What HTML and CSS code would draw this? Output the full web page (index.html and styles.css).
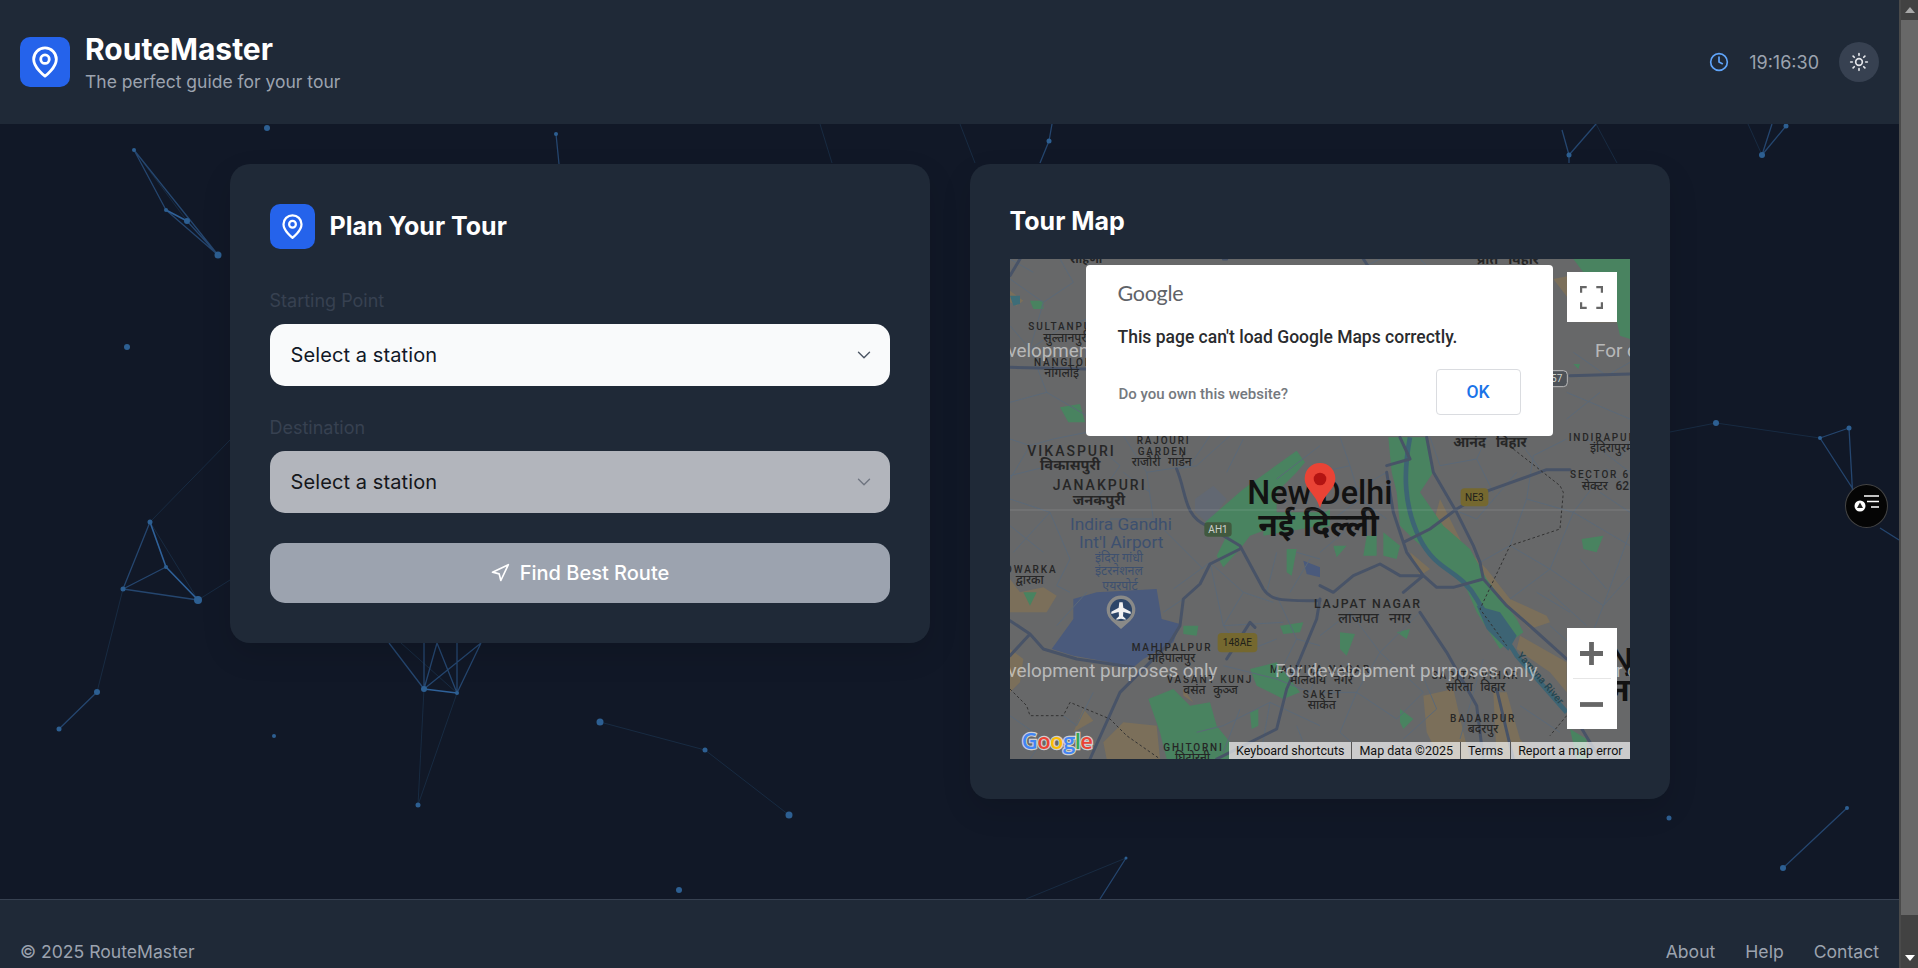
FILE: index.html
```html
<!DOCTYPE html>
<html lang="en">
<head>
<meta charset="utf-8">
<title>RouteMaster</title>
<link rel="stylesheet" href="styles.css">
</head>
<body>
<svg class="particles" viewBox="0 0 1899 1004" aria-hidden="true">
  <g class="lk-dim">
    <path d="M134 150L187 221M150 522L198 600M150 522L230 440M198 600L230 580M123 589L97 692M401 643L457 693M424 689L418 805M457 693L418 805M600 722L705 750M705 750L789 815M1126 858L1026 899M820 124L832 163M960 124L975 163M1670 432L1716 423M1716 423L1820 438M1617 163L1596 124M1748 124L1762 155"/>
  </g>
  <g class="lk">
    <path d="M134 150L166 210M134 150L218 255M166 210L218 255M187 221L218 255M150 522L123 589M166 567L123 589M123 589L198 600M97 692L59 729M389 643L424 689M424 643L424 689M437 643L457 693M437 643L424 689M457 643L457 693M481 643L424 689M481 643L457 693M1126 858L1100 899M556 134L559 164M1049 141L1040 163M1049 141L1052 124M1569 155L1596 124M1569 155L1562 130M1569 163L1569 155M1762 155L1786 126M1762 155L1772 124M1847 808L1783 868M1820 438L1849 428M1849 428L1853 500M1820 438L1860 500M1880 528L1899 540"/>
  </g>
  <g class="lk-hi">
    <path d="M166 210L187 221M150 522L166 567M166 567L198 600M424 689L457 693"/>
  </g>
  <g class="dots">
    <circle cx="134" cy="150" r="2"/><circle cx="166" cy="210" r="2"/><circle cx="187" cy="221" r="3"/><circle cx="218" cy="255" r="3.5"/>
    <circle cx="127" cy="347" r="3"/><circle cx="150" cy="522" r="2.5"/><circle cx="166" cy="567" r="2"/><circle cx="123" cy="589" r="2.5"/>
    <circle cx="198" cy="600" r="4"/><circle cx="97" cy="692" r="3"/><circle cx="59" cy="729" r="2.5"/><circle cx="424" cy="689" r="3"/>
    <circle cx="457" cy="693" r="2"/><circle cx="418" cy="805" r="2.5"/><circle cx="274" cy="736" r="2"/><circle cx="600" cy="722" r="3.5"/>
    <circle cx="705" cy="750" r="2.5"/><circle cx="789" cy="815" r="3.5"/><circle cx="679" cy="890" r="3"/><circle cx="1126" cy="858" r="1.5"/>
    <circle cx="267" cy="128" r="3"/><circle cx="556" cy="134" r="2"/><circle cx="1049" cy="141" r="2.5"/><circle cx="1569" cy="155" r="2.5"/>
    <circle cx="1762" cy="155" r="3"/><circle cx="1786" cy="126" r="2.5"/><circle cx="1716" cy="423" r="3"/><circle cx="1820" cy="438" r="2"/>
    <circle cx="1849" cy="428" r="2.5"/><circle cx="1669" cy="818" r="2.5"/><circle cx="1847" cy="808" r="2"/><circle cx="1783" cy="868" r="3"/>
  </g>
</svg>

<header class="topbar">
  <div class="brand">
    <span class="brand-badge">
      <svg class="brand-pin" viewBox="0 0 24 24"><path d="M20 10c0 6-8 12-8 12s-8-6-8-12a8 8 0 0 1 16 0Z"/><circle cx="12" cy="10" r="3"/></svg>
    </span>
    <div class="brand-text">
      <h1>RouteMaster</h1>
      <p>The perfect guide for your tour</p>
    </div>
  </div>
  <div class="status">
    <svg class="clock" viewBox="0 0 24 24"><circle cx="12" cy="12" r="10"/><path d="M12 6v6l4 2"/></svg>
    <span class="time">19:16:30</span>
    <button class="theme" type="button" aria-label="Toggle theme">
      <svg viewBox="0 0 24 24"><circle cx="12" cy="12" r="4"/><path d="M12 2v2M12 20v2M4.93 4.93l1.41 1.41M17.66 17.66l1.41 1.41M2 12h2M20 12h2M6.34 17.66l-1.41 1.41M19.07 4.93l-1.41 1.41"/></svg>
    </button>
  </div>
</header>

<main class="layout">
  <section class="card">
    <div class="card-head">
      <span class="card-badge">
        <svg viewBox="0 0 24 24"><path d="M20 10c0 6-8 12-8 12s-8-6-8-12a8 8 0 0 1 16 0Z"/><circle cx="12" cy="10" r="3"/></svg>
      </span>
      <h2>Plan Your Tour</h2>
    </div>
    <label class="field-label" for="from">Starting Point</label>
    <div class="select-wrap">
      <select id="from" class="select"><option>Select a station</option></select>
      <svg class="chevron" viewBox="0 0 24 24"><path d="m6 9 6 6 6-6"/></svg>
    </div>
    <label class="field-label second" for="to">Destination</label>
    <div class="select-wrap">
      <select id="to" class="select off" disabled><option>Select a station</option></select>
      <svg class="chevron dimmed" viewBox="0 0 24 24"><path d="m6 9 6 6 6-6"/></svg>
    </div>
    <button class="find" type="button">
      <svg viewBox="0 0 24 24"><path d="M3 11 22 2l-9 19-2-8Z"/></svg>
      Find Best Route
    </button>
  </section>

  <section class="card">
    <h2 class="map-title">Tour Map</h2>
    <div class="map">
      <svg class="map-art" viewBox="0 0 1860 1500">
        <rect width="1860" height="1500" fill="#676869"/>
        <!-- land use -->
        <g class="tan">
          <path d="M0 960L30 1000 100 985 140 1010 110 1060 0 1060ZM0 1170L40 1200 30 1270 0 1300ZM280 1450L340 1390 440 1400 450 1500 290 1500ZM0 95L40 125 20 140 0 130ZM520 1290L550 1330 520 1310ZM220 1350L250 1385 190 1420Z"/>
          <path transform="translate(930 0)" d="M360 720L430 860 500 930 570 1020 680 1070 690 1090 630 1110 560 1040 470 960 400 880 330 830ZM600 1130L740 1210 740 1300 690 1240 590 1170ZM310 1310L400 1290 430 1420 450 1500 360 1500 320 1420ZM520 1300L560 1300 600 1440 650 1500 530 1500ZM700 60L800 40 900 190 800 190ZM270 880L330 930 300 950Z"/>
        </g>
        <path class="blue" d="M125 1170L190 1080 190 1020 260 1000 440 990 455 1080 510 1095 490 1150 400 1200 370 1225 300 1210 190 1190Z"/>
        <path class="blue" d="M880 905L930 925 930 955 890 945Z"/>
        <path class="slate" d="M555 720L610 680 650 720 620 760 590 790 555 760Z"/>
        <g class="green">
          <path d="M585 790L700 690 860 575 885 610 860 640 800 700 800 800 720 830 690 870 640 925 620 890 650 830Z"/>
          <path d="M760 830L930 800 930 760 760 760ZM150 445L210 435 225 490 175 490ZM60 125L100 125 100 150 70 150ZM40 1000L80 1000 60 1040ZM520 1100L565 1100 560 1130 520 1125ZM810 1100L880 1090 870 1120 820 1125ZM830 870L860 870 845 950 830 940ZM415 1320L490 1290 540 1340 600 1330 620 1400 660 1450 660 1500 470 1500 450 1420ZM720 1230L800 1210 870 1300 820 1320 740 1280ZM720 1360L745 1350 745 1400 725 1410Z"/>
          <path transform="translate(930 0)" d="M205 535L320 535 340 640 300 700 370 800 450 870 500 960 590 1080 610 1120 540 1170 470 1060 440 990 350 900 280 840 240 800 230 700 215 640ZM760 0L930 0 930 240 900 230 880 140 790 40ZM760 315L780 315 775 330ZM785 840L850 830 830 880 790 870ZM60 1120L105 1125 80 1190 60 1170ZM230 1120L270 1110 260 1140ZM140 830L170 830 170 890 130 890ZM40 860L80 860 50 895ZM190 820L240 860 230 900 190 890ZM240 1350L280 1380 250 1410 240 1390ZM750 1410L800 1440 800 1500 770 1500ZM0 770L30 750 30 800 0 810Z"/>
        </g>
        <!-- water -->
        <g class="river" transform="translate(930 0)">
          <path d="M270 535C250 640 250 740 300 840S420 930 470 1020 550 1120 590 1190L740 1360"/>
          <path class="wide" d="M470 1040L540 1060 590 1130 565 1175 500 1110Z"/>
        </g>
        <path class="teal" d="M0 110L30 110 30 135 10 140Z"/>
        <!-- minor roads -->
        <path class="minor" d="M0 60L100 130 190 70 150 0M100 130L60 270 150 210 230 180M0 200L60 270M0 430L110 400 230 470M110 400L60 270M0 540L60 560 0 660M230 520L130 540 60 560M0 720L120 760 180 900 140 980 180 1000M120 760L10 880M340 530L410 640 540 620 600 530M410 640L430 780 580 930M430 780L300 780M340 640L420 700M660 530L560 620 500 630M700 540L650 640M490 990L600 910 700 1000M600 910L640 1100 820 1090M700 1000L640 1100M640 1100L700 1180M460 1060L520 1020M250 1300L200 1400 160 1370M640 1220L800 1260 860 1140 800 1010M800 1260L900 1300 930 1220M860 1140L930 1160M640 1400L780 1330 930 1400M780 1330L750 1500M0 1370L100 1440 60 1500M560 1420L640 1400M800 660L930 560M860 880L930 900M700 1000L790 1030M0 650L120 620M770 1000L800 880M840 1000L900 900M700 1180L800 1140M640 1480L690 1350M860 1400L900 1500M100 1440L190 1500M0 800L100 880M140 1100L230 1000M260 560L330 620 260 720M70 40L0 0"/>
        <path class="minor" transform="translate(930 0)" d="M330 535L360 620 470 600 500 535M470 600L520 700M590 535L660 630M590 640L470 780 420 760M740 540L640 590 620 720 570 860 480 910M620 720L760 760 860 630 930 690M760 760L690 930 850 1040 930 950M690 930L570 860M850 1040L790 1190 690 1100M930 820L850 1040M570 1020L690 930M760 760L930 860M800 540L930 640M740 400L930 480M760 280L860 350 930 310M740 480L840 400M0 1130L90 1060 180 1180 300 1060M180 1180L110 1300 230 1380M230 1380L310 1300 180 1180M110 1300L60 1420 150 1500M300 1230L350 1350 250 1440M600 1340L720 1420M60 720L200 640M0 640L90 620 120 720 40 780 0 760M0 1300L110 1300M60 60L180 0M300 0L420 120M0 880L120 780M90 620L60 535M120 720L200 780M690 1000L800 1100M840 700L930 760M780 900L860 990M900 600L930 540M420 1440L490 1200M650 1000L750 1060"/>
        <!-- major roads -->
        <g class="road">
          <path d="M500 630C530 700 520 770 590 800L690 860 760 990C780 1020 800 1025 900 1025L930 1025M690 870L600 915 570 975 520 1020 510 1100 480 1150 330 1300 240 1500M0 1085L60 1125 100 1170 200 1200 370 1225M60 1125L0 1190M0 325L230 330M0 50L30 0M620 1500L800 1410 830 1290 870 1200 920 1080 930 1020M650 1200L720 1090 735 1105M650 0L640 0"/>
          <path transform="translate(930 0)" d="M0 980L40 1000 100 950 180 915 240 950 310 950 350 985 400 985 490 960 560 1040 640 1110 740 1200M200 640L220 760 260 880 310 950M310 950L250 1000M200 620L270 600 240 535M320 535L340 640 410 760 460 860 480 910 490 960M250 850L330 810 410 750 505 695 680 632 750 632M300 1060L380 1180 470 1340 490 1500M530 1290L580 1500M750 350L930 345M130 0L150 30M780 1400L840 1500"/>
        </g>
        <path class="boundary" d="M0 1290L50 1340 60 1370 160 1370 180 1330 300 1380 350 1430 450 1500"/>
        <path class="boundary" transform="translate(930 0)" d="M580 570L720 680 730 700 720 810 570 860 480 1050 560 1160M740 1370L690 1430"/>
        <!-- labels -->
        <g class="lbl">
          <text class="big-b" x="180" y="12">रोहिणी</text>
          <text class="ls" x="55" y="213">SULTANPUR</text>
          <text class="dev sm" x="100" y="248">सुल्तानपुरी</text>
          <text class="ls" x="72" y="321">NANGLOI</text>
          <text class="dev sm" x="103" y="353">नांगलोई</text>
          <text class="ls med" x="52" y="590">VIKASPURI</text>
          <text class="dev med strong" x="90" y="632">विकासपुरी</text>
          <text class="ls med" x="128" y="694">JANAKPURI</text>
          <text class="dev med strong" x="188" y="738">जनकपुरी</text>
          <text class="ls" x="380" y="554">RAJOURI</text>
          <text class="ls" x="383" y="588">GARDEN</text>
          <text class="dev sm" x="365" y="622">राजौरी गार्डन</text>
          <text class="ls" x="-14" y="942">DWARKA</text>
          <text class="dev sm" x="17" y="975">द्वारका</text>
          <text class="ls" x="365" y="1175">MAHIPALPUR</text>
          <text class="dev sm" x="413" y="1210">महिपालपुर</text>
          <text class="ls" x="470" y="1272">VASANT KUNJ</text>
          <text class="dev sm" x="520" y="1305">वसंत कुञ्ज</text>
          <text class="ls" x="460" y="1477">GHITORNI</text>
          <text class="dev sm" x="495" y="1510">घिटोरनी</text>
          <text class="ls" x="780" y="1243">MALVIYA NAGAR</text>
          <text class="dev sm" x="840" y="1275">मालवीय नगर</text>
          <text class="ls" x="878" y="1317">SAKET</text>
          <text class="dev sm" x="893" y="1350">साकेत</text>
          <text class="ls mid" x="912" y="1047">LAJPAT NAGAR</text>
          <text class="dev mid" x="985" y="1092">लाजपत नगर</text>
          <text class="dev mid strong" x="1330" y="563">आनंद विहार</text>
          <text class="ls" x="1676" y="545">INDIRAPURAM</text>
          <text class="dev sm" x="1740" y="578">इंदिरापुरम</text>
          <text class="ls" x="1680" y="658">SECTOR 62</text>
          <text class="dev sm" x="1715" y="692">सेक्टर 62</text>
          <text class="ls" x="1265" y="1260">SARITA VIHAR</text>
          <text class="dev sm" x="1308" y="1295">सरिता विहार</text>
          <text class="ls" x="1320" y="1390">BADARPUR</text>
          <text class="dev sm" x="1373" y="1422">बदरपुर</text>
          <text class="dev mid strong" x="1400" y="14">प्रीत विहार</text>
        </g>
        <g class="airport-lbl">
          <text class="air-big" x="180" y="812">Indira Gandhi</text>
          <text class="air-big" x="207" y="866">Int'l Airport</text>
          <text class="air-sm" x="255" y="908">इंदिरा गांधी</text>
          <text class="air-sm" x="255" y="948">इंटरनेशनल</text>
          <text class="air-sm" x="277" y="992">एयरपोर्ट</text>
        </g>
        <text class="river-lbl" transform="translate(1520 1190) rotate(49)">Yamuna River</text>
        <text class="city" x="712" y="735">New Delhi</text>
        <text class="city dev-city" x="745" y="830">नई दिल्ली</text>
        <text class="city" x="1800" y="1240">Noida</text>
        <text class="city dev-city" x="1800" y="1325">नोएडा</text>
        <!-- shields -->
        <rect class="sh-green" x="583" y="790" width="82" height="43" rx="10"/>
        <text class="sh-t light" x="624" y="822">AH1</text>
        <rect class="sh-olive" x="623" y="1122" width="119" height="58" rx="12"/>
        <text class="sh-t" x="682" y="1162">148AE</text>
        <rect class="sh-olive" x="1352" y="688" width="83" height="54" rx="12"/>
        <text class="sh-t" x="1393" y="727">NE3</text>
        <rect class="sh-dark" x="1590" y="335" width="82" height="48" rx="12"/>
        <text class="sh-t light" x="1640" y="370">57</text>
        <!-- airport pin -->
        <path class="air-pin" d="M333 1110L305 1085A43 43 0 1 1 361 1085Z"/>
        <circle class="air-disc" cx="333" cy="1053" r="33"/>
        <path class="air-plane" d="M328 1030L338 1030 340 1046 362 1058 362 1065 340 1059 339 1072 347 1079 347 1082 333 1079 319 1082 319 1079 327 1072 326 1059 304 1065 304 1058 326 1046Z"/>
        <!-- tile seam + watermark -->
        <path class="seam" d="M0 753H1860"/>
        <g class="mark">
          <text x="-165" y="293">For development purposes only</text>
          <text x="795" y="293">For development purposes only</text>
          <text x="1755" y="293">For development purposes only</text>
          <text x="-165" y="1253">For development purposes only</text>
          <text x="795" y="1253">For development purposes only</text>
          <text x="1755" y="1253">For development purposes only</text>
        </g>
        <!-- marker -->
        <path class="pin" d="M930 747C915 700 884 692 884 658A46 46 0 1 1 976 658C976 692 945 700 930 747Z"/>
        <circle class="pin-dot" cx="930" cy="660" r="19"/>
        <!-- google wordmark -->
        <text class="gm" x="35" y="1470"><tspan fill="#4285f4">G</tspan><tspan fill="#ea4335">o</tspan><tspan fill="#fbbc05">o</tspan><tspan fill="#4285f4">g</tspan><tspan fill="#34a853">l</tspan><tspan fill="#ea4335">e</tspan></text>
      </svg>

      <div class="dialog">
        <div class="dialog-logo">Google</div>
        <div class="dialog-msg">This page can't load Google Maps correctly.</div>
        <div class="dialog-foot">
          <span class="dialog-own">Do you own this website?</span>
          <button class="dialog-ok" type="button">OK</button>
        </div>
      </div>

      <button class="ctl fs" type="button" aria-label="Fullscreen">
        <svg viewBox="0 0 24 24"><path d="M1 7V1h6M17 1h6v6M23 17v6h-6M7 23H1v-6"/></svg>
      </button>
      <div class="ctl zoom">
        <button type="button" aria-label="Zoom in"><svg viewBox="0 0 24 24"><path d="M0 12H24M12 0V24"/></svg></button>
        <i></i>
        <button type="button" aria-label="Zoom out"><svg viewBox="0 0 24 24"><path d="M0 12H24"/></svg></button>
      </div>
      <div class="attrib">
        <span>Keyboard shortcuts</span>
        <span>Map data ©2025</span>
        <span>Terms</span>
        <span>Report a map error</span>
      </div>
    </div>
  </section>
</main>

<footer class="foot">
  <span>© 2025 RouteMaster</span>
  <nav class="foot-links"><a href="#">About</a><a href="#">Help</a><a href="#">Contact</a></nav>
</footer>

<button class="fab" type="button" aria-label="Open menu">
  <svg viewBox="0 0 30 30"><path d="M12 5H27M15 10.5H27M19 16H27"/><circle cx="8" cy="15" r="5.5"/><path class="fab-tri" d="M8 11.5L11 17H5Z"/></svg>
</button>

<div class="scrollbar" aria-hidden="true">
  <span class="sb-btn"><i class="sb-up"></i></span>
  <span class="sb-thumb"></span>
  <span class="sb-rest"></span>
  <span class="sb-btn"><i class="sb-down"></i></span>
</div>
</body>
</html>
```

FILE: styles.css
```css
* { box-sizing: border-box; }
html { background: #111827; }
body { margin: 0 19px 0 0; position: relative; min-height: 1004px; background: #111827; color: #fff; font-family: Inter, "Liberation Sans", sans-serif; }
h1, h2, p { margin: 0; }

.scrollbar { position: fixed; right: 0; top: 0; bottom: 0; width: 19px; z-index: 6; background: #424242; border-left: 2px solid #4a4a4a; display: flex; flex-direction: column; }
.sb-btn { flex: 0 0 20px; background: #424242; display: flex; align-items: center; justify-content: center; }
.sb-thumb { flex: 0 0 895px; background: #686868; }
.sb-rest { flex: 1; }
.sb-up, .sb-down { display: block; width: 0; height: 0; border-left: 5px solid transparent; border-right: 5px solid transparent; }
.sb-up { border-bottom: 6px solid #a8a8a8; }
.sb-down { border-top: 6px solid #fff; }

.particles { position: absolute; left: 0; top: 0; width: 1899px; height: 1004px; z-index: 0; }
.particles g { fill: none; }
.lk-dim { stroke: #182b42; stroke-width: 1; }
.lk { stroke: #25466f; stroke-width: 1.3; }
.lk-hi { stroke: #2f6199; stroke-width: 1.6; }
.particles .dots { fill: #2d5f92; }

.topbar { position: relative; z-index: 1; height: 124px; padding: 0 20px; background: #1f2937; display: flex; align-items: center; justify-content: space-between; }
.brand { display: flex; align-items: center; gap: 15px; }
.brand-badge { width: 50px; height: 50px; border-radius: 10px; background: #2563eb; display: flex; align-items: center; justify-content: center; }
.brand-pin { width: 34px; height: 34px; }
.brand-pin path, .brand-pin circle, .card-badge path, .card-badge circle { fill: none; stroke: #fff; stroke-width: 2; stroke-linecap: round; stroke-linejoin: round; }
.brand-text h1 { font-size: 30px; font-weight: 700; line-height: 38px; }
.brand-text p { font-size: 17.5px; line-height: 25px; color: #9ca3af; margin-top: 1px; }
.status { display: flex; align-items: center; }
.clock { width: 20px; height: 20px; fill: none; stroke: #60a5fa; stroke-width: 2; stroke-linecap: round; stroke-linejoin: round; margin-right: 20px; }
.time { font-size: 18px; color: #9ca3af; margin-right: 20px; }
.theme { width: 40px; height: 40px; border: 0; padding: 0; border-radius: 50%; background: #374151; display: flex; align-items: center; justify-content: center; }
.theme svg { width: 20px; height: 20px; fill: none; stroke: #e5e7eb; stroke-width: 2; stroke-linecap: round; }

.layout { position: relative; z-index: 1; display: grid; grid-template-columns: 700px 700px; gap: 40px; justify-content: center; align-items: start; padding: 40px 0 100px; }
.card { background: #1f2937; border-radius: 20px; padding: 40px; box-shadow: 0 12px 30px rgba(0, 0, 0, .12); }
.card-head { display: flex; align-items: center; gap: 15px; margin-bottom: 39px; }
.card-badge { width: 45px; height: 45px; border-radius: 10px; background: #2563eb; display: flex; align-items: center; justify-content: center; }
.card-badge svg { width: 27px; height: 27px; }
.card h2 { font-size: 25px; font-weight: 700; line-height: 32px; }
.card-head h2 { margin-top: -2px; }
.field-label { display: block; font-size: 18px; line-height: 25px; color: #374151; margin-bottom: 11px; }
.field-label.second { margin-top: 29px; }
.select-wrap { position: relative; }
.select { display: block; width: 100%; height: 62px; border: 0; border-radius: 15px; padding: 0 21px; appearance: none; background: #f9fafb; color: #111827; font-family: Inter, "Liberation Sans", sans-serif; font-size: 20px; letter-spacing: .1px; opacity: 1; }
.select.off { background: #b2b5bc; color: #15171b; }
.chevron { position: absolute; right: 15px; top: 20px; width: 22px; height: 22px; fill: none; stroke: #4b5563; stroke-width: 1.5; stroke-linecap: round; stroke-linejoin: round; pointer-events: none; }
.chevron.dimmed { stroke: #6f7580; }
.find { margin-top: 30px; width: 100%; height: 60px; border: 0; border-radius: 15px; background: #9ca3af; color: #fff; font-family: Inter, "Liberation Sans", sans-serif; font-size: 20px; font-weight: 500; display: flex; align-items: center; justify-content: center; gap: 10px; }
.find svg { width: 20px; height: 20px; fill: none; stroke: #fff; stroke-width: 2; stroke-linecap: round; stroke-linejoin: round; }
.card .map-title { line-height: 34px; margin-bottom: 21px; }

.map { position: relative; width: 620px; height: 500px; overflow: hidden; font-family: Roboto, "Liberation Sans", sans-serif; }
.map-art { display: block; width: 620px; height: 500px; font-family: Roboto, "Noto Sans", sans-serif; }
.tan { fill: #7b6f5a; }
.blue { fill: #4a5a7c; }
.slate { fill: #626872; }
.green { fill: #498360; }
.river { fill: none; stroke: #3d6474; stroke-width: 14; }
.river .wide { fill: #3d6474; stroke: none; }
.teal { fill: #3d6d78; }
.minor { fill: none; stroke: #5b6978; stroke-width: 3; }
.road { fill: none; stroke: #485367; stroke-width: 9; stroke-linejoin: round; stroke-linecap: round; }
.boundary { fill: none; stroke: #333; stroke-width: 3; stroke-dasharray: 8 7; }
.lbl { fill: #262626; font-size: 30px; }
.ls { letter-spacing: 5.5px; font-weight: 500; font-size: 30px; }
.ls.med { font-size: 42px; letter-spacing: 6px; }
.ls.mid { font-size: 37px; letter-spacing: 5px; }
.dev { font-weight: 500; word-spacing: 14px; }
.dev.sm { font-size: 36px; }
.dev.med { font-size: 44px; }
.dev.mid { font-size: 42px; word-spacing: 20px; }
.dev.strong { font-weight: 700; }
.big-b { font-size: 36px; font-weight: 700; }
.airport-lbl { fill: #3d506f; }
.air-big { font-size: 52px; }
.air-sm { font-size: 37px; }
.river-lbl { fill: #24444f; font-size: 30px; font-weight: 500; letter-spacing: 1px; }
.city { fill: #121212; font-size: 97px; font-weight: 500; }
.dev-city { font-weight: 700; font-size: 96px; }
.sh-green { fill: #41593f; }
.sh-olive { fill: #75682f; }
.sh-dark { fill: #4d5258; stroke: #b9b9b9; stroke-width: 3; }
.sh-t { fill: #20201a; font-size: 30px; text-anchor: middle; }
.sh-t.light { fill: #cdd2cc; }
.air-pin { fill: #8a8a88; }
.air-disc { fill: #2c4568; }
.air-plane { fill: #f0f0f0; }
.seam { stroke: rgba(255, 255, 255, .22); stroke-width: 2; }
.mark { fill: rgba(255, 255, 255, .55); font-size: 56.5px; }
.pin { fill: #ea4335; }
.pin-dot { fill: #b31412; }
.gm { font-family: "Open Sans", Roboto, sans-serif; font-size: 66px; font-weight: 600; letter-spacing: -1.5px; stroke: rgba(255, 255, 255, .7); stroke-width: 7px; paint-order: stroke; }

.dialog { position: absolute; left: 76px; top: 6px; width: 467px; height: 171px; background: #fff; border-radius: 4px; color: #2a2b2e; padding: 0 32px; }
.dialog-logo { font-family: Lato, "Open Sans", sans-serif; color: #5f6368; font-size: 21.5px; line-height: 28px; margin-top: 14px; letter-spacing: -.3px; }
.dialog-msg { font-size: 17.5px; font-weight: 500; line-height: 24px; margin-top: 18px; }
.dialog-foot { display: flex; align-items: center; justify-content: space-between; margin-top: 21px; }
.dialog-own { font-size: 15px; font-weight: 500; color: #75797e; padding-left: 1px; margin-top: 2px; }
.dialog-ok { width: 85px; height: 46px; border: 1px solid #dadce0; border-radius: 4px; background: #fff; color: #1a73e8; font-family: Roboto, sans-serif; font-size: 17.5px; font-weight: 500; margin-top: -1px; }
.ctl { position: absolute; left: 557px; width: 50px; background: #fff; padding: 0; border: 0; }
.ctl svg { stroke: #666; fill: none; }
.fs { top: 13px; height: 50px; display: flex; align-items: center; justify-content: center; }
.fs svg { width: 23px; height: 23px; stroke-width: 2.6; }
.zoom { top: 369px; height: 101px; display: flex; flex-direction: column; align-items: center; }
.zoom button { flex: 1; width: 100%; padding: 0; border: 0; background: none; display: flex; align-items: center; justify-content: center; }
.zoom svg { width: 23px; height: 23px; stroke-width: 5; }
.zoom i { display: block; width: 38px; height: 1px; background: #e6e6e6; }
.attrib { position: absolute; right: 0; bottom: 0; height: 17px; display: flex; background: rgba(255, 255, 255, .66); color: #111; font-size: 12.5px; line-height: 17px; }
.attrib span { padding: 0 7px; border-left: 1px solid #555; white-space: nowrap; }
.attrib span:first-child { border-left: 0; }

.foot { position: relative; z-index: 1; height: 105px; background: #1f2937; border-top: 1px solid #374151; padding: 40px 20px; display: flex; justify-content: space-between; color: #9ca3af; font-size: 17.6px; line-height: 24px; }
.foot-links { display: flex; gap: 30px; }
.foot-links a { color: #9ca3af; text-decoration: none; }

.fab { position: fixed; left: 1845px; top: 484px; width: 43px; height: 44px; padding: 0; border-radius: 50%; background: #050505; border: 1px solid #444; z-index: 5; display: flex; align-items: center; justify-content: center; }
.fab svg { width: 30px; height: 30px; fill: none; }
.fab path { stroke: #fff; stroke-width: 1.4; }
.fab circle { fill: #fff; }
.fab .fab-tri { fill: #222; stroke: none; }
```
